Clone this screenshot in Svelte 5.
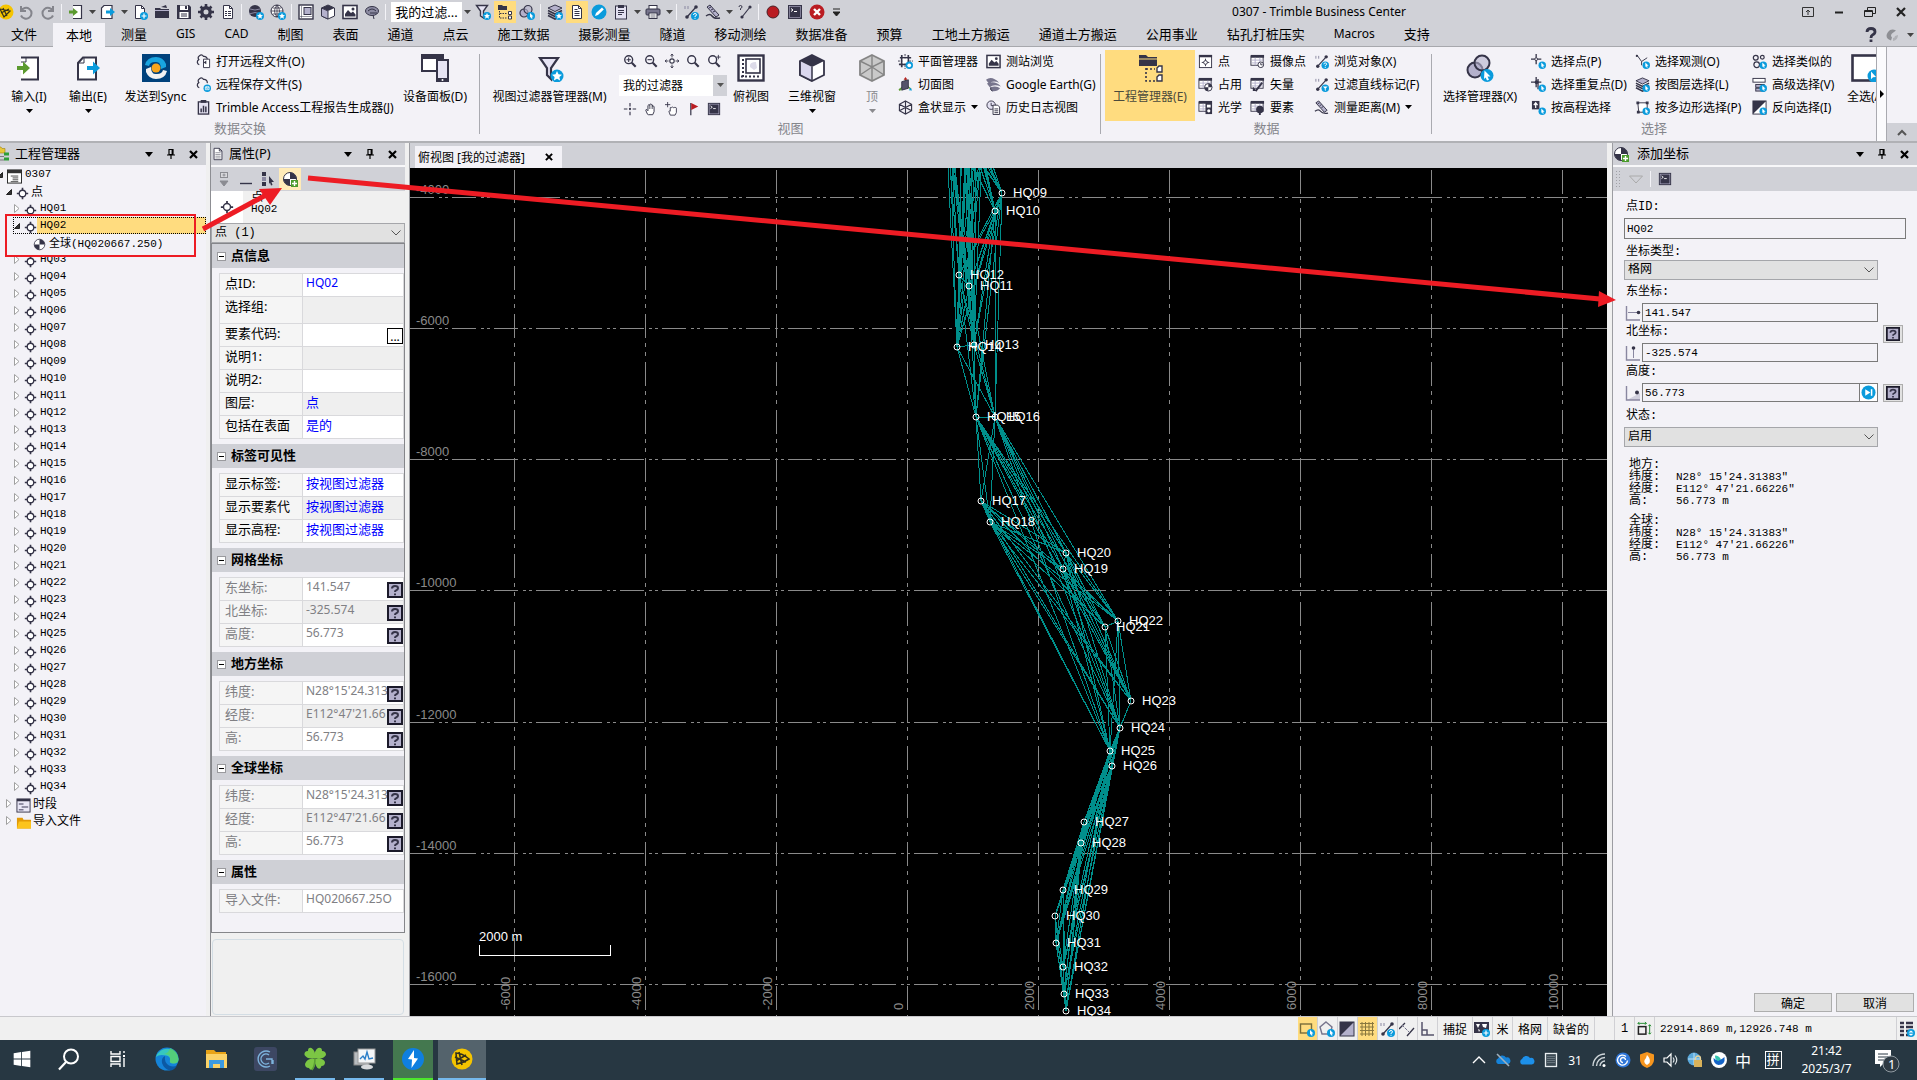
<script>
	const D = "#353448";
	const L = "#b4b1cc";
	const B = "#0a9bdc";

	const badge = (mark) => `<circle cx="12" cy="12" r="4" fill="${B}"/>${mark}`;
	const starMark = `<path d="M12 9l.9 2 2.1.2-1.6 1.4.5 2.1-1.9-1.1-1.9 1.1.5-2.1L9 11.200l2.100-.2z" fill="#fff"/>`;
	const cursorMark = `<path d="M11 9l3.500 3.500h-1.700l.8 1.800-1 .4-.8-1.700-.8.8z" fill="#fff"/>`;
	const infoMark = `<path d="M10.500 11q0-1.500 1.500-1.500t1.500 1.400q0 1-1.500 1.300v.8M12 13.800v1" stroke="#fff" fill="none"/>`;
	const filterMark = `<path d="M9.500 10h5l-2 2.300v2.500l-1-.7v-1.800z" fill="#fff"/>`;
	const plusMark = `<path d="M12 9.500v5M9.500 12h5" stroke="#fff" stroke-width="1.200"/>`;
	const grid = `<rect x="1" y="2" width="13" height="10" fill="#fff" stroke="${D}"/><rect x="1" y="1" width="14" height="3" fill="${D}"/><path d="M2 6.500h12M2 9.500h12M5.500 4v8M10.500 4v8" stroke="${L}"/>`;
	const measure = `<path d="M4 13l9-10" stroke="${D}" stroke-width="1.200"/><circle cx="4" cy="13" r="1.800" fill="${D}"/><circle cx="13" cy="3" r="1.800" fill="${D}"/><path d="M2 2v3M5 2v3" stroke="#8987a0"/>`;
	const page = `<path d="M3.500 1.500h6l3 3v10h-9z" fill="#fff" stroke="${D}"/><path d="M9.500 1.500v3h3" fill="none" stroke="${D}"/>`;
	const lens = `<circle cx="6.500" cy="6.500" r="4.500" fill="#f6f5fb" stroke="${D}" stroke-width="1.600"/><path d="M10 10l4.500 4.500" stroke="${D}" stroke-width="2.400"/>`;
	const term = `<rect x="1.500" y="1.500" width="13" height="13" fill="${D}" stroke="${D}"/><rect x="2.500" y="2.500" width="11" height="11" fill="none" stroke="${L}" stroke-width=".6"/><path d="M4 4.500l2 1.500-2 1.500M7 7.500h3" stroke="#fff" fill="none"/>`;
	const stack = `<path d="M8 1l7 3-7 3.500L1 4z" fill="${L}" stroke="${D}"/><path d="M1 6.500L8 10l7-3.500M1 9L8 12.500 15 9M1 11.500L8 15l7-3.500" fill="none" stroke="${D}" stroke-width="1.600"/>`;
	const globePoint = `<circle cx="8" cy="8" r="6.500" fill="#fff" stroke="${D}"/><path d="M8 8V1.500A6.500 6.500 0 0 1 14.500 8zM8 8v6.500A6.500 6.500 0 0 1 1.500 8z" fill="${D}"/>`;
	const rings = `<circle cx="5" cy="9" r="4" fill="${L}" stroke="${D}" stroke-width="1.200"/><circle cx="9" cy="5.500" r="4" fill="${L}" fill-opacity=".6" stroke="${D}" stroke-width="1.200"/>`;
	const cloud = `<path d="M3.500 11.500a3 3 0 0 1-.5-5.500 3 3 0 0 1 5-3.500 3.500 3.500 0 0 1 4 4" fill="none" stroke="${D}" stroke-width="1.300"/>`;
	const funnel = `<path d="M1.500 1.500h11l-4 5.500v7l-3-2V7z" fill="#e6e4f4" stroke="${D}" stroke-width="1.400"/>`;

	const icons = {
		app: `<circle cx="6" cy="8" r="7.500" fill="#f5c400"/><path d="M0 5l10 2-6 6zM1 9l8-4M3 4l4 8" stroke="#33301c" fill="none" stroke-width="1.200"/>`,
		undo: `<path d="M3 2v5h5M3 7a5.500 5.500 0 1 1 0 4.500" fill="none" stroke="#84858c" stroke-width="2"/>`,
		redo: `<path d="M13 2v5H8M13 7a5.500 5.500 0 1 0 0 4.500" fill="none" stroke="#84858c" stroke-width="2"/>`,
		import: `<path d="M5 1.500h8.500v13H5" fill="#fff" stroke="${D}" stroke-width="1.200"/><path d="M1 6.500h4V4l5 4-5 4V9.500H1z" fill="#5b9a2f"/>`,
		export: `<path d="M4 1.500h8v13H1.500V4z" fill="#fff" stroke="${D}" stroke-width="1.200"/><path d="M6 6.500h4V4l5 4-5 4V9.500H6z" fill="${B}"/>`,
		newdoc: page + badge(plusMark),
		open: `<path d="M1 4h5l1 1h8v9H1z" fill="${D}"/><path d="M1 6.500h14" stroke="${L}"/><path d="M7 3l5-2 1 3z" fill="${D}"/>`,
		save: `<path d="M1 1h12l2 2v12H1z" fill="${D}"/><rect x="4" y="1.500" width="8" height="4.500" fill="#fff"/><rect x="3.500" y="8" width="9" height="6" fill="#fff"/><path d="M5 10h6M5 12h6" stroke="${D}"/><rect x="9" y="2" width="2" height="3" fill="${D}"/>`,
		gear: `<circle cx="8" cy="8" r="4.200" fill="none" stroke="${D}" stroke-width="3.400"/><path d="M8 0v3M8 13v3M0 8h3M13 8h3M2.500 2.500l2 2M11.500 11.500l2 2M13.500 2.500l-2 2M4.500 11.500l-2 2" stroke="${D}" stroke-width="2.600"/>`,
		doc: page + `<path d="M5 7.500h2M8 7.500h3M5 9.500h2M8 9.500h3M5 11.500h2M8 11.500h3" stroke="${D}"/>`,
		globeStar: `<circle cx="7" cy="7" r="6" fill="${D}"/><path d="M1 10q6-3 12 0M2 5q5 2 10 0" stroke="#8987a0" fill="none"/>` + badge(starMark),
		gridGlobe: `<circle cx="7" cy="7" r="6" fill="#fff" stroke="${D}"/><path d="M1 7h12M7 1v12M2.500 4h9M2.500 10h9M7 1q-5 6 0 12M7 1q5 6 0 12" fill="none" stroke="${D}" stroke-width=".8"/>` + badge(starMark),
		plan: `<rect x="1" y="1" width="14" height="14" fill="#fff" stroke="${D}" stroke-width="1.400"/><path d="M3.500 2.500v11M2.500 12.500h11" stroke="${D}" stroke-dasharray="1 1"/><rect x="6" y="3.500" width="7" height="7" fill="${L}" stroke="${D}"/>`,
		cube: `<path d="M8 1l6.500 3v8L8 15l-6.500-3V4z" fill="#fff" stroke="${D}"/><path d="M8 1l6.500 3L8 7 1.500 4z" fill="${D}"/><path d="M8 7v8l-6.500-3V4z" fill="${L}" stroke="${D}"/>`,
		photo: `<rect x="1" y="1.500" width="14" height="13" fill="#fff" stroke="${D}" stroke-width="1.600"/><path d="M3 12.500V10l3-4 3 3 2-1.500 2.500 3v2z" fill="${D}"/><circle cx="11" cy="5" r="1.500" fill="${D}"/>`,
		cloudDark: `<ellipse cx="8" cy="7" rx="6.500" ry="4.500" fill="#8c8ba2" stroke="${D}"/><path d="M4 7q4-4 8 0M6 9h7M9 11l1 4" stroke="${D}" fill="none"/>`,
		filterStar: funnel + badge(starMark),
		project: `<path d="M1 1h4l1 1h4v4H1z" fill="${D}"/><path d="M2.500 7v7h8M3 9.500h7" stroke="${D}" fill="none" stroke-dasharray="1.500 1"/><path d="M11.500 7.500h3v3h-3zM11.500 12h3v3h-3z" fill="#fff" stroke="${D}"/>`,
		ringsCursor: rings + badge(cursorMark),
		stackStar: stack + badge(starMark),
		stackCursor: stack + badge(cursorMark),
		docs: page + `<path d="M5.500 5.500h3M5.500 7.500h5M5.500 9.500h5M5.500 11.500h5" stroke="${D}"/>`,
		edit: `<circle cx="8" cy="8" r="7.500" fill="${B}"/><path d="M4 12l1-3 6-5.500 1.800 2L7 11z" fill="#fff"/>`,
		clip: `<rect x="2.500" y="2" width="11" height="13" fill="#e3e1f1" stroke="${D}"/><rect x="5" y="1" width="6" height="3" fill="${D}"/><path d="M5 6.500h6M5 8.500h6M5 10.500h4" stroke="${D}"/>`,
		print: `<rect x="4" y="1.500" width="8" height="4" fill="#fff" stroke="${D}"/><rect x="1" y="5" width="14" height="6" rx="1" fill="#77758d" stroke="${D}"/><rect x="4" y="9" width="8" height="5.500" fill="#fff" stroke="${D}"/><path d="M5.500 11h5M5.500 13h5" stroke="${D}" stroke-width=".7"/>`,
		measureInfo: measure + badge(infoMark),
		measureFilter: measure + badge(filterMark),
		ruler: `<path d="M2 3l3-2 9 10-3 2zM4 4l2-1M6 6l2-1M8 8l2-1" fill="${L}" stroke="${D}"/><path d="M1 12q4-3 6 0t8 2" fill="none" stroke="${D}" stroke-width="1.400"/>`,
		measureQ: `<path d="M5 13l8-10" stroke="${D}" stroke-width="1.200"/><circle cx="5" cy="13" r="1.600" fill="${D}"/><circle cx="13" cy="3" r="1.600" fill="${D}"/><path d="M2 3q0-1.500 1.500-1.500T5 3q0 1-1.500 1.500V6" stroke="${D}" fill="none"/>`,
		record: `<circle cx="8" cy="8" r="6" fill="#ba1c22" stroke="#4b2026"/>`,
		term,
		stop: `<circle cx="8" cy="8" r="7.500" fill="#ba1c22"/><path d="M5 5l6 6M11 5l-6 6" stroke="#fff" stroke-width="2.400"/>`,
		cloudDoc: cloud + `<path d="M8 5.500h6.500v9H8z" fill="#fff" stroke="${D}"/><path d="M8 9l3-2v4z" fill="${D}"/>`,
		cloudSave: cloud + badge(`<path d="M10 10.500h4v3h-4zM11 10v2h2v-2" fill="none" stroke="#fff" stroke-width=".8"/>`),
		report: `<rect x="2.500" y="2" width="11" height="13" fill="#e3e1f1" stroke="${D}" stroke-width="1.400"/><rect x="5" y="0" width="6" height="3" fill="${D}"/><path d="M5.500 13V9M8 13V6M10.500 13V7" stroke="${D}" stroke-width="1.600"/>`,
		zoomIn: lens + `<path d="M4 6.500h5M6.500 4v5" stroke="${D}" stroke-width="1.200"/>`,
		zoomOut: lens + `<path d="M4 6.500h5" stroke="${D}" stroke-width="1.200"/>`,
		zoom: lens,
		zoomPlus: lens + `<path d="M13 1v5M10.500 3.500h5" stroke="${D}"/>`,
		extents: `<circle cx="8" cy="8" r="2.500" fill="#fff" stroke="${D}" stroke-width="1.300"/><path d="M8 0v4M8 12v4M0 8h4M12 8h4M6.500 2L8 0l1.500 2M6.500 14L8 16l1.500-2M2 6.500L0 8l2 1.500M14 6.500L16 8l-2 1.500" stroke="${D}" fill="none"/>`,
		center: `<circle cx="8" cy="8" r="1.300" fill="${D}"/><path d="M8 1v4M8 11v4M1 8h4M11 8h4" stroke="${D}" stroke-width="1.300"/>`,
		hand: `<path d="M4 14L2 9.500q0-1.500 1.500-.5l1 1V4q1-1.500 1.700 0V3q1-1.500 1.800 0v.5q1-1.500 1.800 0V5q1.200-1 1.700.5V11l-1.500 3.500H5z" fill="#fff" stroke="${D}" stroke-width="1.100"/><path d="M6.200 4v4M8 3.500V8M9.800 4v4" stroke="${D}" stroke-width=".7"/>`,
		handPlus: `<path d="M6 15L4.500 11q0-1.500 1.500-.5V6.500q1-1.500 1.700 0 1-1.500 1.800 0 1-1 1.800 0 1.200-1 1.700.5V12l-1.500 3z" fill="#fff" stroke="${D}"/><path d="M3 0v6M0 3h6" stroke="${D}"/>`,
		flag: `<path d="M5.500 1v14" stroke="${D}" stroke-width="1.400"/><path d="M6 1l8 4-8 4z" fill="#ba1c22"/>`,
		planeMgr: `<path d="M2 4h12M1 11h12M4 1v13M11 1v13" stroke="${D}" stroke-width="1.800"/><path d="M0 7.500h16M7.500 0v16" stroke="${D}" stroke-dasharray="2 1"/><rect x="5" y="5" width="5" height="5" fill="#fff"/>` + badge(`<circle cx="12" cy="12" r="2" fill="#fff"/>`),
		section: `<path d="M8 6V1M9 9l5 4M7 9l-6 5" stroke="#5b9a2f" stroke-width="1.400"/><path d="M4 5l7-2v9l-7 2z" fill="#55536b" stroke="${D}"/><path d="M8 0l2 3H6z" fill="#ba1c22"/><path d="M15 14.500l-3.500-.5 2-2.500z" fill="${B}"/><path d="M1 14.500l3-.5-2-2z" fill="#5b9a2f"/>`,
		boxes: `<path d="M8 1l6.500 3.500v7L8 15l-6.500-3.500v-7zM1.500 4.500L8 8l6.500-3.500M8 8v7M8 1v7M1.500 11.500L8 8l6.500 3.500" fill="none" stroke="${D}" stroke-width="1.200"/>`,
		earth: `<path d="M0 3q6-5 14 3-7-3-11 1zM1 7q8-4 15 3-8-3-12 1zM5 11q6-2 10 1-3 4-9 3-2-2-1-4z" fill="#77758d"/><path d="M5 11q-1 3 2 4" stroke="${D}" fill="none"/>`,
		history: `<circle cx="5.500" cy="5.500" r="4.500" fill="#e3e1f1" stroke="${D}"/><path d="M5.500 3v3H8" stroke="${D}" fill="none"/><path d="M7.500 5.500h5l2 2v8h-7z" fill="#fff" stroke="${D}"/><path d="M9 9.500h4M9 11.500h4M9 13.500h4" stroke="${D}"/>`,
		pointBox: `<rect x="1.500" y="1.500" width="13" height="13" fill="#fff" stroke="${D}"/><rect x="1" y="1" width="14" height="2.500" fill="${D}"/><circle cx="8" cy="9" r="2" fill="none" stroke="${D}"/><path d="M8 5v2M8 11v2M4 9h2M10 9h2" stroke="${D}"/>`,
		occupy: grid + `<circle cx="11" cy="11" r="4" fill="#fff" stroke="${D}"/><path d="M11 11V7a4 4 0 0 1 4 4zM11 11v4a4 4 0 0 1-4-4z" fill="${D}"/>`,
		optics: grid + `<rect x="8" y="3" width="7" height="12" fill="${D}"/><rect x="9.500" y="5" width="4" height="3" fill="#fff"/><circle cx="11.500" cy="11.500" r="1.700" fill="#fff"/>`,
		camera: grid + `<circle cx="11.500" cy="11.500" r="3" fill="#fff" stroke="${D}"/><path d="M11.500 9.500v2h2" stroke="${D}" fill="none"/>`,
		vector: grid + `<path d="M6 15l7-9" stroke="${D}" stroke-width="2"/><path d="M3 10l4 5H3z" fill="${D}"/>`,
		feature: grid + `<circle cx="10.500" cy="10" r="4" fill="${D}"/><path d="M10.500 11v5" stroke="${D}" stroke-width="2"/>`,
		selPoint: `<path d="M5.500 0v4M5.500 7v4M0 5.500h4M7 5.500h4" stroke="${D}" stroke-width="1.400"/><circle cx="5.500" cy="5.500" r="1.500" fill="none" stroke="${D}"/>` + badge(cursorMark),
		selDup: `<path d="M5.500 0v11M0 5.500h11M7.500 2v11" stroke="${D}" stroke-width="1.400"/><circle cx="6" cy="5.500" r="2" fill="${D}"/>` + badge(cursorMark),
		selElev: `<rect x="1" y="1" width="8" height="9" fill="${D}"/><path d="M5 8.500V3.500M3 5.500l2-2.500 2 2.500" stroke="#fff" stroke-width="1.300" fill="none"/>` + badge(cursorMark),
		selObs: `<path d="M2 1l5 7 6-4M7 8v4" fill="none" stroke="${D}"/><circle cx="2" cy="2" r="1.200" fill="${D}"/>` + badge(cursorMark),
		selPoly: `<path d="M3 3h10v10H4z" fill="#fff" stroke="${D}"/><path d="M1.500 1.500h3v3h-3zM11.500 1.500h3v3h-3zM2 11.500h3v3H2z" fill="${D}"/>` + badge(cursorMark),
		selLike: `<circle cx="4" cy="4" r="2.600" fill="none" stroke="${D}" stroke-width="1.300"/><circle cx="11" cy="3.500" r="2" fill="none" stroke="${D}" stroke-width="1.300"/><circle cx="5" cy="11.500" r="3" fill="none" stroke="${D}" stroke-width="1.300"/>` + badge(cursorMark),
		selAdv: `<rect x="1" y="1.500" width="13" height="4" fill="#fff" stroke="${D}"/><rect x="4" y="8" width="9" height="3" fill="${L}" stroke="${D}"/><rect x="4" y="12" width="9" height="3" fill="${L}" stroke="${D}"/>` + badge(cursorMark),
		invert: `<rect x="1" y="1" width="14" height="14" fill="#fff" stroke="${D}"/><path d="M1 1h14L1 15z" fill="${D}"/>` + badge(cursorMark),
		// panels
		tree: `<path d="M0 1h6l1 1.500h3V7H0z" fill="#e9c83a" stroke="#a18412" stroke-width=".6"/><path d="M3.500 8v6h5M3.500 10.500h5" stroke="#222" stroke-dasharray="1 1" fill="none"/><path d="M9 6.500h5v3H9zM9 11.500h5v3H9z" fill="#2f9e3a"/>`,
		sheet: page + `<path d="M5 6.500h6M5 8.500h6M5 10.500h6M5 12.500h6" stroke="#8c8c96"/>`,
		coord: globePoint + `<rect x="9" y="9" width="7" height="7" fill="#4b9b2c"/><path d="M12.500 10v5M10 12.500h5" stroke="#fff" stroke-width="1.400"/>`,
		globePoint,
		point: `<circle cx="8" cy="8" r="4" fill="#fff" stroke="${D}" stroke-width="1.600"/><path d="M8 1v3M8 12v3M1 8h3M12 8h3" stroke="${D}" stroke-width="2"/>`,
		root: `<rect x=".5" y="1" width="15" height="14" fill="#fff" stroke="#222"/><rect x="1" y="1" width="14" height="3.500" fill="#333"/><path d="M4 7.500h8M6 9.500h6M6 11.500h6M4 13.500h8" stroke="#444"/>`,
		session: `<rect x="1" y="1" width="14" height="14" fill="#e9e7f6" stroke="${D}"/><rect x="1" y="1" width="14" height="2.500" fill="${D}"/><path d="M3 6.500h5M6 9.500h7M3 12.500h5" stroke="#77758d" stroke-width="1.600"/>`,
		folder: `<path d="M1 3h6l1 2h8v9.500H1z" fill="#e29a06"/><path d="M1 14.500L3 7h13v7.500z" fill="#fcc41c"/>`,
		pinDown: `<rect x="4.500" y="1.500" width="7" height="5" fill="#d8d8dc" stroke="#8b8c92"/><path d="M8 2.500v3M6.500 4h3M4 10h8l-4 5z" stroke="#8b8c92" fill="#8b8c92"/>`,
		minus: `<path d="M2 12.500h12" stroke="${D}" stroke-width="1.400"/>`,
		listSel: `<path d="M2 1h4v4H2zM2 11h4v4H2z" fill="${D}"/><path d="M2 6h4v4H2z" fill="#8987a0"/><path d="M9 5l5 6h-2.500l1 3-1.500.5-1-3L9 13z" fill="${D}"/>`,
		east: `<path d="M1.500 1v14H15" stroke="#8987a0" fill="none" stroke-width="1.400"/><path d="M3 7.500h10" stroke="#8987a0"/><circle cx="13.500" cy="7.500" r="1.800" fill="${D}"/>`,
		north: `<path d="M1.500 1v14H15" stroke="#8987a0" fill="none" stroke-width="1.400"/><path d="M8.500 3v10" stroke="#8987a0"/><circle cx="8.500" cy="3" r="1.800" fill="${D}"/>`,
		height: `<path d="M2 15l13-7v7z" fill="#d0cfdd"/><path d="M1.500 1v14H15" stroke="#8987a0" fill="none" stroke-width="1.400"/><circle cx="12" cy="7.500" r="2" fill="${D}"/>`,
		play: `<circle cx="8" cy="8" r="7.500" fill="${B}"/><path d="M4.500 4.500L10 8l-5.500 3.500z" fill="#fff"/><path d="M11.300 4.500v7" stroke="#fff" stroke-width="1.600"/>`,
		tri: `<path d="M1.500 5h13L8 12z" fill="none" stroke="#aaa"/>`,
		help: `<rect x="1" y="1" width="14" height="14" fill="${L}" stroke="#1b1a2a" stroke-width="2"/><path d="M5 6.500q0-2.500 3-2.500t3 2.300q0 1.400-1.700 2-1.300.4-1.300 1.700" stroke="${D}" stroke-width="2" fill="none"/><path d="M7 11.500h2v1.700H7z" fill="${D}"/>`,
		// status bar
		snapRect: `<rect x="1.500" y="3" width="11" height="9" fill="none" stroke="#7a6d3b" stroke-width="1.400"/>` + badge(cursorMark),
		snapPoly: `<path d="M7 1l6 5-2 7H3L1 6z" fill="none" stroke="#77758d" stroke-width="1.400"/>` + badge(cursorMark),
		snapInv: `<rect x="1" y="1" width="14" height="14" fill="${L}" stroke="${D}"/><path d="M1 1h14L1 15z" fill="${D}"/>`,
		snapGrid: `<path d="M1 2.500h14M1 6h14M1 9.500h14M1 13h14M3 1v14M6.500 1v14M10 1v14M13.500 1v14" stroke="#8a783f"/>`,
		snapLines: `<path d="M0 8l6-6M8 15l7-8" stroke="${D}" stroke-width="1.300"/><path d="M3 4l8 8" stroke="#77758d" stroke-dasharray="3 1"/>`,
		snapPerp: `<path d="M3 1v13h12M3 9h5v5" fill="none" stroke="#55536b" stroke-width="1.500"/>`,
		map: `<rect x="0" y="1" width="15" height="11" fill="${D}"/><path d="M2 3h4l-2 4zM8 3h5l-1 4-3-1zM4 8l2 1-1 2z" fill="#fff"/>` + badge(plusMark),
		dims: `<rect x="1.500" y="6" width="8" height="8" fill="none" stroke="#222" stroke-width="1.600"/><path d="M1 2.500h9M2.500 1L1 2.500 2.500 4M8.500 1L10 2.500 8.500 4M13.500 4v10M12 5.500L13.500 4 15 5.500M12 12.500l1.500 1.500 1.500-1.500" stroke="#1d8a2a" fill="none"/>`,
		rows: `<path d="M1 2h4M1 6h4M1 10h4M1 14h4M7 2h7M7 6h7M7 10h3M7 14h3" stroke="${D}" stroke-width="2.400"/>` + badge(`<path d="M9.500 11.500l2.500-2 2.500 2zM9.500 12.800l2.500 2 2.500-2z" fill="#fff"/>`),
		// tray
		caretUp: `<path d="M2 11l6-6 6 6" fill="none" stroke="#fff" stroke-width="1.400"/>`,
		driveOff: `<path d="M3 12a3 3 0 0 1 0-5.500 4.500 4.500 0 0 1 8-1 3.300 3.300 0 0 1 2 6.500z" fill="#1583da"/><path d="M2 2l12 12" stroke="#9fb0bc" stroke-width="1.600"/>`,
		drive: `<path d="M3 12.500a3 3 0 0 1 0-5.500 4.500 4.500 0 0 1 8-1 3.300 3.300 0 0 1 2 6.500z" fill="#1d90ea"/>`,
		chip: `<rect x="2.500" y="1.500" width="11" height="13" fill="#3c4a54" stroke="#e9eef1" stroke-width="1.300"/><path d="M5 4v8M7 4v8M9 4v8M11 4v8" stroke="#93a0a8" stroke-dasharray="1 1"/>`,
		wifi: `<path d="M2 14A12 12 0 0 1 14 2M5.500 14A8.500 8.500 0 0 1 14 5.500M9 14a5 5 0 0 1 5-5" fill="none" stroke="#cfd6da" stroke-width="1.400"/><circle cx="13" cy="13.500" r="1.500" fill="#fff"/>`,
		swirl: `<circle cx="8" cy="8" r="7.500" fill="#2f76d8"/><path d="M11 4.500a5 5 0 1 0 1.500 4M10.500 8a2.500 2.500 0 1 0-2.500 2.500" fill="none" stroke="#fff" stroke-width="1.400"/>`,
		shield: `<path d="M8 0l7 2.500V8q0 5-7 8-7-3-7-8V2.500z" fill="#f6951e"/><path d="M8 3q4 4 2.500 8L8 13q-5-3-1-7z" fill="#fff"/>`,
		sound: `<path d="M1 6h3l4-4v12l-4-4H1z" fill="none" stroke="#fff" stroke-width="1.200"/><path d="M10 5.500q2 2.500 0 5M12 3.500q3.500 4.500 0 9" fill="none" stroke="#dfe5e8" stroke-width="1.200"/>`,
		lock: `<circle cx="7" cy="7" r="6.500" fill="#5aa9dc"/><path d="M7 1v12M1 7h12" stroke="#bfe0f3"/><rect x="7" y="8" width="8" height="7" fill="#d9b25a"/><path d="M8.500 8V6.500a2.500 2.500 0 0 1 5 0V8" stroke="#e8d29a" stroke-width="1.300" fill="none"/>`,
		bird: `<circle cx="8" cy="8" r="8" fill="#fff"/><path d="M2.500 6q5 5 11-1 1 8-6 8-5-1-5-7z" fill="#1464c8"/><path d="M4 3.500q4 0 6 4L7 9q-3-1-3-5.500z" fill="#35c5b0"/>`,
	};

	const big = {
		import: `<path d="M6 3.500h17v22H6" fill="#fff" stroke="${D}" stroke-width="2"/><path d="M11 3v5H6" fill="none" stroke="${D}"/><path d="M2 12h6V7.500l7 6.500-7 6.500V16H2z" fill="#5b9a2f"/>`,
		export: `<path d="M9 3.500h13v22H4V9z" fill="#fff" stroke="${D}" stroke-width="2"/><path d="M10 3v6H4" fill="none" stroke="${D}"/><path d="M13 12h6V7.500l7 6.500-7 6.500V16h-6z" fill="${B}"/>`,
		sync: `<rect width="28" height="28" fill="#00427c"/><path d="M3 11q2-8 11-8 7 0 10 7v3l-5 2q0-8-6-7-5 0-6 4z" fill="#19a5e0"/><path d="M25 17q-2 8-11 8-7 0-10-7v-3l5-2q0 8 6 7 5 0 6-4z" fill="#f2f2f2"/><circle cx="14" cy="14" r="4.500" fill="#f9a51b"/>`,
		devices: `<rect x="1" y="1" width="21" height="16" fill="#fff" stroke="${D}" stroke-width="2"/><path d="M0 0h23v5H0z" fill="${D}"/><rect x="16" y="6" width="11" height="21" fill="#e6e4f4" stroke="${D}" stroke-width="2"/><path d="M15 24h13v4H15z" fill="${D}"/><circle cx="21.500" cy="26" r="1" fill="#fff"/>`,
		filter: `<path d="M4 4h18l-7 10v11l-4-4v-7z" fill="#e6e4f4" stroke="${D}" stroke-width="2.200"/><circle cx="21" cy="22" r="6.500" fill="${B}"/><path d="M21 17l1.500 3.300 3.500.4-2.600 2.400.7 3.500-3.100-1.800-3.100 1.800.7-3.500-2.600-2.400 3.500-.4z" fill="#fff"/>`,
		plan: `<rect x="1.500" y="1.500" width="25" height="25" fill="#fff" stroke="${D}" stroke-width="2.400"/><path d="M6 5v18M4 22.500h20" stroke="${D}" stroke-width="2" stroke-dasharray="2 2"/><rect x="9" y="5" width="14" height="14" fill="#fff" stroke="${D}" stroke-width="1.600"/><path d="M19 8q-7 0-6 5l4 3 3-2z" fill="#dcdae8"/>`,
		cube: `<path d="M14 1l12 6v14l-12 6-12-6V7z" fill="#fff" stroke="${D}" stroke-width="1.800"/><path d="M14 13v14L2 21V7z" fill="#dad7ee"/><path d="M14 1l12 6-12 6L2 7z" fill="${D}"/><path d="M14 13v14" stroke="${D}" stroke-width="1.500"/><path d="M2 7v14l12 6" fill="none" stroke="${D}" stroke-width="1.800"/>`,
		cubeGray: `<path d="M14 1l12 6v14l-12 6-12-6V7z" fill="#c9c9c9" stroke="#858585" stroke-width="1.800"/><path d="M2 7l12 6 12-6M14 13v14M14 13L2 21M14 13l12 8M14 1v12" fill="none" stroke="#858585" stroke-width="1.400"/>`,
		project: `<path d="M3 1h7l2 2h9v9H3z" fill="${D}"/><path d="M1 5h22" stroke="#ffdc7f"/><path d="M10 15h9M10 14v13h10" stroke="${D}" fill="none" stroke-width="1.600" stroke-dasharray="2 2"/><path d="M21 14l2-2h3v6h-5zM21 23l2-2h3v6h-5z" fill="#fff" stroke="${D}" stroke-width="1.400"/>`,
		rings: `<circle cx="9" cy="16" r="7.500" fill="${L}" stroke="${D}" stroke-width="2"/><circle cx="16" cy="9" r="7.500" fill="${L}" fill-opacity=".6" stroke="${D}" stroke-width="2"/><circle cx="21" cy="21.500" r="6.500" fill="${B}"/><path d="M18.500 16.500l6 6h-3l1.500 3.300-2 .8-1.300-3.200-1.700 1.600z" fill="#fff"/>`,
		all: `<rect x="1.500" y="1.500" width="27" height="25" fill="#fff" stroke="${D}" stroke-width="2.600"/><circle cx="23" cy="22" r="6.500" fill="${B}"/><path d="M20 17.500l5 5.500-3 .3-2 2z" fill="#fff"/>`,
	};

	const apps = {
		start: `<path d="M2 4.500l9-1.300V11H2zM12 3l10-1.500V11H12zM2 12h9v7.800L2 18.500zM12 12h10v9.500L12 20z" fill="#fff" transform="translate(0 .5)"/>`,
		search: `<circle cx="14" cy="9.500" r="7" fill="none" stroke="#fff" stroke-width="2"/><path d="M9 15l-7 7.500" stroke="#fff" stroke-width="2.200"/>`,
		task: `<path d="M5 4v3h9V4M5 20v-3h9v3M5 9.500h9v5H5zM18 4v2M18 11v9" fill="none" stroke="#fff" stroke-width="1.400"/><path d="M17 8h2v2h-2z" fill="#fff"/>`,
		edge: `<circle cx="12" cy="12" r="11.500" fill="#1583d8"/><path d="M1 10A11.500 11.500 0 0 1 23.500 12q0 4.500-5 4.500-4.500 0-3.500-3.500.5-4-4-4.500Q4 7 1 10z" fill="#37c6c0"/><path d="M15 1q8 3 8.500 11 0 4.500-5 4.500-4.500 0-3.500-3.500 1-6-6-6 5-1 6-6z" fill="#5fd35e" fill-opacity=".7"/><path d="M10 9q-4 2-3 7 2 6 8 7.500 4 0 7-5-4 2-8 0-5-3-4-9.500z" fill="#0c59a4"/>`,
		files: `<path d="M2 3h8l2 2h10v16H2z" fill="#e8a317"/><path d="M2 7h21v14H2z" fill="#fbd267"/><path d="M5 21v-8h15v8h-4v-4H9v4z" fill="#3c9ae0"/>`,
		gt: `<rect x="1" y="0" width="23" height="24" rx="3" fill="#3d4763"/><path d="M17 5A8 8 0 1 0 17 19M16 8a5 5 0 1 0 0 8M13 12h6v5M20 13v4" fill="none" stroke="#7db4de" stroke-width="1.400"/>`,
		clover: `<path d="M12 11Q5 13 1.500 8 1 4 5 4q0-4 3.500-3 4 2 3.500 10zM12 11q-1-8 3-10 4-1 4 3 4 0 4 4-3 5-11 3zM12 12q8-2 10 3 0 4-3.500 4-1 4-4 2-3-3-2.500-9zM12 12q1 7-2 10-3 2-4-1-4 0-4-4 2-6 10-5z" fill="#7cc644"/><path d="M12 11q0 8-3 12" stroke="#5a9e34" fill="none" stroke-width="1.600"/>`,
		monitor: `<rect x="2" y="5" width="15" height="13" fill="#b8bcc0" stroke="#888"/><rect x="6" y="2" width="17" height="14" fill="#f4f6f8" stroke="#999"/><path d="M8 12l3-3 2 3 2-7 2 7 4-1" fill="none" stroke="#2c7fc9" stroke-width="1.400"/><ellipse cx="15" cy="20" rx="6" ry="2.600" fill="#d7d9dc"/>`,
		bolt: `<circle cx="12" cy="12" r="11" fill="#0f7fe0"/><path d="M13 3L7 12l4 .5L10.500 21 17 11.500l-4-.5z" fill="#fff"/>`,
		trimble: `<circle cx="12" cy="12" r="10.500" fill="#f5c400"/><path d="M6 6q6 0 13 6-6 4-12 5zM5 10l11 5M6 14l10-6M9 5l3 13" stroke="#33301c" fill="none" stroke-width="1.600"/>`,
	};

	const quick = [
		"undo", "redo", "|", "import", "v", "export", "v", "newdoc", "open", "save", "gear", "doc", "|",
		"globeStar", "gridGlobe", "|", "plan", "cube", "photo", "cloudDark", "|", "combo", "v",
		"filterStar", "*project", "ringsCursor", "|", "stackStar", "*docs", "edit", "clip", "v", "print", "v", "|",
		"measureInfo", "ruler", "v", "measureQ", "|", "record", "term", "stop",
	];

	const tabs = [
		"文件", "本地", "测量", "GIS", "CAD", "制图", "表面", "通道", "点云", "施工数据", "摄影测量", "隧道", "移动测绘",
		"数据准备", "预算", "工地土方搬运", "通道土方搬运", "公用事业", "钻孔打桩压实", "Macros", "支持",
	];

	const groups = [
		{
			label: "数据交换",
			cls: "exchange",
			cols: [
				{ big: "import", text: "输入(I)", arrow: true },
				{ big: "export", text: "输出(E)", arrow: true },
				{ big: "sync", text: "发送到Sync" },
				{ list: [["cloudDoc", "打开远程文件(O)"], ["cloudSave", "远程保存文件(S)"], ["report", "Trimble Access工程报告生成器(J)"]] },
				{ big: "devices", text: "设备面板(D)" },
			],
		},
		{
			label: "视图",
			cls: "view",
			cols: [
				{ big: "filter", text: "视图过滤器管理器(M)" },
				{ zoom: true },
				{ big: "plan", text: "俯视图" },
				{ big: "cube", text: "三维视窗", arrow: true },
				{ big: "cubeGray", text: "顶", arrow: true, off: true },
				{ list: [["planeMgr", "平面管理器"], ["section", "切面图"], ["boxes", "盒状显示", true]] },
				{ list: [["photo", "测站浏览"], ["earth", "Google Earth(G)"], ["history", "历史日志视图"]] },
			],
		},
		{
			label: "数据",
			cls: "data",
			cols: [
				{ big: "project", text: "工程管理器(E)", on: true },
				{ list: [["pointBox", "点"], ["occupy", "占用"], ["optics", "光学"]] },
				{ list: [["camera", "摄像点"], ["vector", "矢量"], ["feature", "要素"]] },
				{ list: [["measureInfo", "浏览对象(X)"], ["measureFilter", "过滤直线标记(F)"], ["ruler", "测量距离(M)", true]] },
			],
		},
		{
			label: "选择",
			cls: "select",
			cols: [
				{ big: "rings", text: "选择管理器(X)" },
				{ list: [["selPoint", "选择点(P)"], ["selDup", "选择重复点(D)"], ["selElev", "按高程选择"]] },
				{ list: [["selObs", "选择观测(O)"], ["stackCursor", "按图层选择(L)"], ["selPoly", "按多边形选择(P)"]] },
				{ list: [["selLike", "选择类似的"], ["selAdv", "高级选择(V)"], ["invert", "反向选择(I)"]] },
				{ big: "all", text: "全选(A)" },
			],
		},
	];

	const pad = (n) => String(n).padStart(2, "0");

	let tree = [
		{ level: 0, icon: "root", text: "0307", open: true, code: true },
		{ level: 1, icon: "point", text: "点", open: true },
	];
	for (let i = 1; i <= 34; i++) {
		tree.push({ level: 2, icon: "point", text: "HQ" + pad(i), open: i === 2, code: true });
		if (i === 2) tree.push({ level: 3, icon: "globePoint", text: "全球(HQ020667.250)", leaf: true, code: true });
	}
	tree.push({ level: 1, icon: "session", text: "时段" }, { level: 1, icon: "folder", text: "导入文件" });

	let selected = $state("HQ02");

	const angles = [
		{ k: "纬度:", v: "N28°15'24.313", help: true },
		{ k: "经度:", v: "E112°47'21.66", help: true },
		{ k: "高:", v: "56.773", help: true },
	];
	const sections = [
		{
			title: "点信息",
			rows: [
				{ k: "点ID:", v: "HQ02" },
				{ k: "选择组:", v: "", tall: true },
				{ k: "要素代码:", v: "", more: true },
				{ k: "说明1:", v: "" },
				{ k: "说明2:", v: "" },
				{ k: "图层:", v: "点" },
				{ k: "包括在表面", v: "是的" },
			],
		},
		{
			title: "标签可见性",
			rows: [
				{ k: "显示标签:", v: "按视图过滤器" },
				{ k: "显示要素代", v: "按视图过滤器" },
				{ k: "显示高程:", v: "按视图过滤器" },
			],
		},
		{
			title: "网格坐标",
			off: true,
			rows: [
				{ k: "东坐标:", v: "141.547", help: true },
				{ k: "北坐标:", v: "-325.574", help: true },
				{ k: "高度:", v: "56.773", help: true },
			],
		},
		{ title: "地方坐标", off: true, rows: angles },
		{ title: "全球坐标", off: true, rows: angles },
		{ title: "属性", off: true, rows: [{ k: "导入文件:", v: "HQ020667.25O" }] },
	];

	// map drawing, in pixels from the top left of the plan view
	const gridX = [104, 235, 366, 497, 628, 759, 890, 1021, 1152];
	const gridY = [29, 160, 291, 422, 554, 685, 816];
	const points = {
		9: [592, 25], 10: [585, 43], 11: [559, 118], 12: [549, 107], 13: [564, 177], 14: [547, 179],
		15: [566, 249], 16: [585, 249], 17: [571, 333], 18: [580, 354], 19: [653, 401], 20: [656, 385],
		21: [695, 459], 22: [708, 453], 23: [721, 533], 24: [710, 560], 25: [700, 583], 26: [702, 598],
		27: [674, 654], 28: [671, 675], 29: [653, 722], 30: [645, 748], 31: [646, 775], 32: [653, 799],
		33: [654, 826], 34: [656, 843],
	};
	// stations north of the visible area
	const above = [[535, -60], [539, -50], [553, -90], [557, -40], [560, -70], [566, -30], [572, -20]];

	const lines = [];
	const join = (from, to) => {
		for (let a = from; a <= to; a++)
			for (let b = a + 1; b <= to; b++) lines.push([points[a], points[b]]);
	};
	join(9, 16);
	join(15, 25);
	join(24, 34);
	for (const p of above) for (let i = 9; i <= 14; i++) lines.push([p, points[i]]);
	const network = lines.map(([a, b]) => `M${a[0]} ${a[1]}L${b[0]} ${b[1]}`).join("");

	const tray = ["caretUp", "driveOff", "drive", "chip", "31", "wifi", "swirl", "shield", "sound", "lock", "bird"];
</script>

{#snippet icon(name, size = 16)}
	<svg class="icon" width={size} height={size} viewBox="0 0 16 16" aria-hidden="true">{@html icons[name]}</svg>
{/snippet}

{#snippet caret()}
	<svg class="icon" width="7" height="4" viewBox="0 0 7 4" aria-hidden="true"><path d="M0 0h7L3.500 4z" fill="currentColor" /></svg>
{/snippet}

{#snippet chevron()}
	<svg class="chev" width="10" height="6" viewBox="0 0 10 6" aria-hidden="true"><path d="M.5.500L5 5 9.500.500" fill="none" stroke="#555" /></svg>
{/snippet}

{#snippet tools()}
	<button class="tool" aria-label="菜单"><svg width="8" height="5" viewBox="0 0 8 5"><path d="M0 0h8L4 5z" /></svg></button>
	<button class="tool" aria-label="固定"><svg width="8" height="10" viewBox="0 0 8 10"><path d="M2 .5h4v5H2zM5.200.5v5M0 6h8M4 6v4" fill="none" stroke="#000" stroke-width="1.200" /></svg></button>
	<button class="tool" aria-label="关闭"><svg width="9" height="9" viewBox="0 0 9 9"><path d="M1 1l7 7M8 1L1 8" stroke="#000" stroke-width="2.200" /></svg></button>
{/snippet}

<div class="window">
	<header>
		<div class="titlebar">
			<div class="quick">
				<svg class="icon" width="15" height="16" viewBox="0 0 15 16" aria-hidden="true">{@html icons.app}</svg>
				{#each quick as q}
					{#if q === "|"}
						<span class="sep"></span>
					{:else if q === "v"}
						<button class="drop" aria-label="更多">{@render caret()}</button>
					{:else if q === "combo"}
						<button class="quick-combo">我的过滤...</button>
					{:else}
						<button class="qa" class:on={q[0] === "*"} aria-label={q.replace("*", "")}>{@render icon(q.replace("*", ""))}</button>
					{/if}
				{/each}
				<button class="customize" aria-label="自定义"><svg width="7" height="8" viewBox="0 0 7 8"><path d="M0 1h7M0 4h7L3.500 8z" stroke="#222" fill="#222" /></svg></button>
			</div>
			<h1>0307 - Trimble Business Center</h1>
			<div class="controls">
				<button aria-label="功能区"><svg width="12" height="12" viewBox="0 0 12 12"><path d="M.5 1.500h11v9H.5zM6 9V4M4 6l2-2 2 2" fill="none" stroke="#333" /></svg></button>
				<button aria-label="最小化"><svg width="12" height="12" viewBox="0 0 12 12"><path d="M2 6.500h8" stroke="#222" stroke-width="2" /></svg></button>
				<button aria-label="还原"><svg width="12" height="12" viewBox="0 0 12 12"><path d="M3.500 4V1.500h8v6H9M.5 4.500h8v6h-8zM.5 5.500h8" fill="none" stroke="#222" /></svg></button>
				<button aria-label="关闭"><svg width="12" height="12" viewBox="0 0 12 12"><path d="M2 2l8 8M10 2l-8 8" stroke="#222" stroke-width="2.200" /></svg></button>
			</div>
		</div>
		<nav>
			{#each tabs as tab}
				<button class="tab" class:active={tab === "本地"} class:latin={tab === "GIS" || tab === "CAD" || tab === "Macros"}>{tab}</button>
			{/each}
			<div class="nav-help">
				<button aria-label="帮助"><svg width="12" height="16" viewBox="0 0 12 16"><path d="M2 5q0-3.500 4-3.500t4 3.200q0 2-2.300 3Q6 8.500 6 11" fill="none" stroke="#353448" stroke-width="2.800" /><path d="M4.600 12.500h2.800V15H4.600z" fill="#353448" /></svg></button>
				<button aria-label="账户"><svg width="14" height="14" viewBox="0 0 14 14"><path d="M11 2.500Q6 0 3 4t0 7l3 1.500 1-3q-2-2 0-4z" fill="#8e8f94" /><path d="M8 13q5-1 5-6l-3 1q0 2-2 2z" fill="#b0b1b6" /></svg></button>
				{@render caret()}
			</div>
		</nav>
	</header>

	<div class="ribbon">
		{#each groups as g}
			<section class="group {g.cls}">
				<div class="cols">
					{#each g.cols as c}
						{#if c.big}
							<button class="big" class:on={c.on} class:off={c.off}>
								<svg width="28" height="28" viewBox="0 0 28 28" aria-hidden="true">{@html big[c.big]}</svg>
								<span>{c.text}</span>
								{#if c.arrow}{@render caret()}{/if}
							</button>
						{:else if c.zoom}
							<div class="zooms">
								<div class="zoom-row">
									{#each ["zoomIn", "zoomOut", "extents", "zoom", "zoomPlus"] as z}
										<button aria-label={z}>{@render icon(z, 14)}</button>
									{/each}
								</div>
								<button class="combo"><span>我的过滤器</span><i>{@render caret()}</i></button>
								<div class="zoom-row">
									{#each ["center", "hand", "handPlus", "flag", "term"] as z}
										<button aria-label={z}>{@render icon(z, 14)}</button>
									{/each}
								</div>
							</div>
						{:else}
							<div class="list">
								{#each c.list as [ic, text, more]}
									<button class="cmd">{@render icon(ic, 15)}<span>{text}</span>{#if more}{@render caret()}{/if}</button>
								{/each}
							</div>
						{/if}
					{/each}
				</div>
				<h2>{g.label}</h2>
			</section>
		{/each}
		<button class="ribbon-next" aria-label="向右滚动"><svg width="4" height="8" viewBox="0 0 4 8"><path d="M0 0l4 4-4 4z" /></svg></button>
		<div class="ribbon-end">
			<button aria-label="折叠"><svg width="10" height="7" viewBox="0 0 10 7"><path d="M1 6l4-4 4 4" fill="none" stroke="#555" stroke-width="2" /></svg></button>
		</div>
	</div>

	<main>
		<aside class="explorer">
			<div class="panel-head">{@render icon("tree")}<h3>工程管理器</h3>{@render tools()}</div>
			<ul class="tree">
				{#each tree as n}
					<li class="level{n.level}" class:selected={n.text === selected}>
						<svg class="twisty" width="8" height="9" viewBox="0 0 8 9" aria-hidden="true">
							{#if n.open}
								<path d="M6.500 2.500v5h-5z" fill="#333" stroke="#222" />
							{:else if !n.leaf}
								<path d="M1.500.500l4.500 4-4.500 4z" fill="#fff" stroke="#a0a0a0" />
							{/if}
						</svg>
						{@render icon(n.icon, n.level > 1 || n.icon === "point" ? 13 : 15)}
						<button class:code={n.code} onclick={() => (selected = n.text)}>{n.text}</button>
					</li>
				{/each}
			</ul>
		</aside>

		<aside class="props">
			<div class="panel-head">{@render icon("sheet", 14)}<h3>属性(P)</h3>{@render tools()}</div>
			<div class="panel-tools">
				<button aria-label="固定选择">{@render icon("pinDown")}</button>
				<button aria-label="折叠">{@render icon("minus")}</button>
				<button aria-label="选择">{@render icon("listSel")}</button>
				<button class="on" aria-label="添加坐标">{@render icon("coord")}</button>
			</div>
			<div class="what">
				<div class="what-icon">{@render icon("point", 14)}</div>
				<div class="what-text"><span>点</span><span class="code">HQ02</span></div>
			</div>
			<div class="pick">
				<select aria-label="对象"><option>点 (1)</option></select>
				{@render chevron()}
			</div>
			<div class="sheet">
				{#each sections as s}
					<h4><i></i>{s.title}</h4>
					<table class:off={s.off}>
						<tbody>
							{#each s.rows as r}
								<tr class:tall={r.tall}>
									<th scope="row">{r.k}</th>
									<td>
										<div class="cell">
											<span class:cjk={!/\d/.test(r.v)}>{r.v}</span>
											{#if r.help}<button aria-label="设为未知">{@render icon("help")}</button>{/if}
											{#if r.more}<button class="more">...</button>{/if}
										</div>
									</td>
								</tr>
							{/each}
						</tbody>
					</table>
				{/each}
			</div>
			<div class="hint"></div>
		</aside>

		<section class="plan">
			<div class="plan-tabs">
				<button class="plan-tab">俯视图 [我的过滤器]<svg width="8" height="8" viewBox="0 0 9 9"><path d="M1 1l7 7M8 1L1 8" stroke="#000" stroke-width="2.200" /></svg></button>
			</div>
			<svg class="map" role="img" aria-label="俯视图">
				<g class="grid">
					{#each gridX as x}<line x1={x} y1="2" x2={x} y2="100%" stroke-dasharray="24 5 4 5 4 6" />{/each}
					{#each gridY as y}<line x1="0" y1={y} x2="100%" y2={y} stroke-dasharray="24 5 3 3 3 4" />{/each}
				</g>
				<g class="axis">
					{#each gridY as y, i}<text x="6" y={y - 3}>{-4000 - i * 2000}</text>{/each}
					{#each gridX as x, i}<text transform="translate({x - 4} 842) rotate(-90)">{-6000 + i * 2000}</text>{/each}
				</g>
				<path class="network" d={network} />
				{#each Object.entries(points) as [n, [x, y]]}
					<circle cx={x} cy={y} r="3" />
					<text class="mark" x={x + 11} y={y + 4}>HQ{pad(n)}</text>
				{/each}
				<path class="scale" d="M69 777v10h131v-10" />
				<text class="mark" x="69" y="773">2000 m</text>
			</svg>
		</section>

		<aside class="coords">
			<div class="panel-head">{@render icon("coord")}<h3>添加坐标</h3>{@render tools()}</div>
			<div class="panel-tools">
				<span class="grip"></span>
				<button aria-label="展开">{@render icon("tri")}</button>
				<span class="sep"></span>
				<button aria-label="命令">{@render icon("term", 14)}</button>
			</div>
			<form onsubmit={(e) => e.preventDefault()}>
				<label for="pid">点ID:</label>
				<input id="pid" class="wide" value="HQ02" />
				<label for="ctype">坐标类型:</label>
				<div class="pick"><select id="ctype"><option>格网</option></select>{@render chevron()}</div>
				<label for="east">东坐标:</label>
				<div class="field">{@render icon("east")}<input id="east" value="141.547" /></div>
				<div class="label-help">
					<label for="north">北坐标:</label>
					<button type="button" class="unknown" aria-label="设为未知">{@render icon("help", 14)}</button>
				</div>
				<div class="field">{@render icon("north")}<input id="north" value="-325.574" /></div>
				<label for="elev">高度:</label>
				<div class="field">
					{@render icon("height")}<input id="elev" value="56.773" />
					<button type="button" class="play" aria-label="选项">{@render icon("play", 15)}</button>
					<button type="button" class="unknown" aria-label="设为未知">{@render icon("help", 14)}</button>
				</div>
				<label class="status-label" for="state">状态:</label>
				<div class="pick"><select id="state"><option>启用</option></select>{@render chevron()}</div>
				{#each ["地方:", "全球:"] as name}
					<dl>
						<dt>{name}</dt><dd></dd>
						<dt>纬度:</dt><dd>N28° 15′24.31383″</dd>
						<dt>经度:</dt><dd>E112° 47′21.66226″</dd>
						<dt>高:</dt><dd>56.773 m</dd>
					</dl>
				{/each}
				<div class="actions">
					<button type="submit">确定</button>
					<button type="button">取消</button>
				</div>
			</form>
		</aside>
	</main>

	<div class="statusbar">
		<button class="on" aria-label="矩形选择">{@render icon("snapRect")}</button>
		<button aria-label="多边形选择">{@render icon("snapPoly")}</button>
		<button aria-label="反选">{@render icon("snapInv")}</button>
		<button class="on" aria-label="网格">{@render icon("snapGrid")}</button>
		<button aria-label="测量">{@render icon("measureInfo")}</button>
		<button aria-label="线">{@render icon("snapLines")}</button>
		<button aria-label="正交">{@render icon("snapPerp")}</button>
		<button class="word">捕捉</button>
		<button aria-label="坐标系">{@render icon("map")}</button>
		<button>米</button>
		<button class="word">格网</button>
		<button class="word">缺省的</button>
		<span class="blank"></span>
		<span class="count">1</span>
		<span class="ext">{@render icon("dims", 15)}</span>
		<span class="pos">22914.869 m,12926.748 m</span>
		<button class="last" aria-label="选项">{@render icon("rows")}</button>
	</div>

	<footer>
		{#each Object.entries(apps) as [name, art]}
			<button class="app {name}" aria-label={name}><svg width="24" height="24" viewBox="0 0 24 24" aria-hidden="true">{@html art}</svg></button>
		{/each}
		<div class="tray">
			{#each tray as t}
				<button aria-label={t}>{#if t === "31"}31{:else}{@render icon(t)}{/if}</button>
			{/each}
			<button class="lang">中</button>
			<button class="ime"><b>拼</b></button>
			<div class="clock"><span>21:42</span><span>2025/3/7</span></div>
			<button class="notes" aria-label="通知">
				<svg width="26" height="26" viewBox="0 0 26 26"><path d="M1 3h16v14H9l-3 3v-3H1z" fill="#fff" /><path d="M4 7h10M4 10h10M4 13h6" stroke="#2a3944" /><circle cx="17" cy="17" r="8" fill="#2e3a43" stroke="#909aa1" /><text x="14" y="22" fill="#fff" font-size="13">1</text></svg>
			</button>
		</div>
	</footer>

	<svg class="callouts" aria-hidden="true">
		<rect x="6" y="215" width="189" height="41" fill="none" stroke="#ed1c24" stroke-width="2" />
		<path d="M203 229L266 195" stroke="#ed1c24" stroke-width="5" />
		<path d="M282 188L270 205 259 189z" fill="#ed1c24" />
		<path d="M308 178L1600 299" stroke="#ed1c24" stroke-width="5" />
		<path d="M1616 300L1598 307 1599 291z" fill="#ed1c24" />
	</svg>
</div>

<style>
	:global(body) {
		margin: 0;
		background: #f0f0f0;
	}

	.window {
		position: relative;
		display: flex;
		flex-direction: column;
		min-height: 100vh;
		overflow: hidden;
		background: #f0f0f0;
		color: #000;
		font-family: "Noto Sans", "Noto Sans CJK SC", sans-serif;
		font-size: 12px;
	}

	button {
		display: flex;
		align-items: center;
		justify-content: center;
		margin: 0;
		padding: 0;
		border: 0;
		background: none;
		color: inherit;
		font: inherit;
		white-space: nowrap;
	}

	h1,
	h2,
	h3,
	h4,
	ul,
	dl,
	dd {
		margin: 0;
		padding: 0;
		font-weight: 400;
	}

	.icon {
		flex: none;
	}

	.code {
		font-family: "Liberation Mono", "Noto Sans CJK SC", monospace;
		font-size: 11px;
	}

	/* title bar and tabs */
	header {
		background: #d0d1d7;
	}

	.titlebar {
		display: flex;
		align-items: center;
		height: 23px;
	}

	.quick {
		display: flex;
		align-items: center;
		height: 23px;
	}

	.qa {
		width: 22px;
		height: 22px;
	}

	.on {
		background: #ffdc7f;
	}

	.drop {
		width: 10px;
		height: 22px;
		color: #444;
	}

	.customize {
		width: 16px;
		height: 22px;
	}

	.sep {
		width: 1px;
		height: 16px;
		margin: 0 3px 0 2px;
		background: #f3f3f7;
	}

	.quick-combo {
		width: 71px;
		height: 20px;
		margin-left: 2px;
		background: #fff;
		font-size: 13px;
	}

	h1 {
		flex: 1;
		padding-left: 2px;
		font-size: 12px;
		text-align: center;
	}

	.controls {
		display: flex;
		padding-right: 1px;
	}

	.controls button {
		width: 31px;
		height: 22px;
	}

	nav {
		display: flex;
		height: 24px;
		gap: 3px;
		border-bottom: 1px solid #a7a8ad;
		box-sizing: border-box;
	}

	.tab {
		padding: 0 13px 2px;
		font-size: 13px;
	}

	.tab:first-child {
		padding-left: 11px;
	}

	.tab.latin {
		font-size: 12px;
	}

	.tab.active {
		height: 24px;
		background: #f3f2f7;
	}

	.nav-help {
		display: flex;
		align-items: center;
		gap: 8px;
		margin-left: auto;
		padding-right: 3px;
		color: #444;
	}

	/* ribbon */
	.ribbon {
		display: flex;
		height: 94px;
		background: #f3f2f7;
		border-bottom: 2px solid #b0b1b5;
	}

	.group {
		display: flex;
		flex-direction: column;
		padding-top: 3px;
		flex: none;
		box-sizing: border-box;
		background: linear-gradient(#a9aab0, #a9aab0) no-repeat right 7px / 1px 80px;
	}

	.exchange {
		width: 480px;
	}

	.view {
		width: 621px;
	}

	.data {
		width: 331px;
	}

	.select {
		flex: 1;
		min-width: 0;
		overflow: hidden;
		background: none;
	}

	.cols {
		display: grid;
		height: 71px;
	}

	.exchange .cols {
		grid-template-columns: 58px 60px 75px 204px 76px;
	}

	.view .cols {
		grid-template-columns: 139px 108px 48px 74px 46px 88px auto;
	}

	.data .cols {
		grid-template-columns: 90px 52px 64px auto;
		padding-left: 4px;
	}

	.select .cols {
		grid-template-columns: 96px 104px 117px 94px 60px;
		width: 471px;
	}

	.big {
		flex-direction: column;
		justify-content: flex-start;
		padding-top: 4px;
		box-sizing: border-box;
	}

	.big span {
		margin: 6px 0 3px;
		line-height: 18px;
	}

	.big.on {
		color: #4b4a3c;
	}

	.big.off {
		color: #8a8a8e;
	}

	.select .big:last-child {
		align-items: flex-start;
		padding-left: 8px;
	}

	.select .big:last-child span {
		margin-left: -4px;
	}

	.list {
		padding-left: 3px;
	}

	.cmd {
		height: 23px;
		padding-bottom: 1px;
		gap: 5px;
		box-sizing: border-box;
	}

	.zooms {
		display: flex;
		flex-direction: column;
		gap: 2px;
		height: 70px;
	}

	.zoom-row {
		display: flex;
		height: 23px;
	}

	.zoom-row button {
		width: 21px;
	}

	.combo {
		height: 21px;
		background: #fff;
		justify-content: space-between;
		padding-left: 4px;
	}

	.combo i {
		display: flex;
		align-items: center;
		justify-content: center;
		width: 14px;
		height: 21px;
		background: #d0d1d7;
		color: #555;
	}

	h2 {
		color: #85868c;
		font-size: 13px;
		line-height: 15px;
		text-align: center;
	}

	.ribbon-next {
		width: 11px;
		background: #fbfbfd;
		border-left: 1px solid #a9aab0;
		border-right: 1px solid #a9aab0;
		box-sizing: border-box;
	}

	.ribbon-end {
		display: flex;
		align-items: flex-end;
		width: 30px;
	}

	.ribbon-end button {
		width: 30px;
		height: 18px;
		background: #d0d1d7;
	}

	/* docked panels */
	main {
		display: flex;
		flex: 1;
		min-height: 0;
		border-bottom: 1px solid #c8c8cc;
	}

	.panel-head {
		display: flex;
		align-items: center;
		height: 22px;
		padding-right: 2px;
		background: #d0d1d7;
	}

	h3 {
		flex: 1;
		padding-bottom: 3px;
		font-size: 13px;
	}

	.tool {
		width: 22px;
		height: 22px;
	}

	.explorer {
		width: 206px;
		margin-right: 4px;
		background: #f3f2f7;
	}

	.explorer .panel-head .icon {
		margin-left: -5px;
		margin-right: 4px;
	}

	.tree {
		list-style: none;
		padding-top: 1px;
	}

	.tree li {
		display: flex;
		align-items: center;
		height: 17px;
		box-sizing: border-box;
	}

	.tree button {
		height: 17px;
		margin-left: 2px;
		padding-bottom: 1px;
		box-sizing: border-box;
	}

	.tree .code {
		margin-left: 3px;
	}

	.tree .icon {
		position: relative;
		top: 2px;
	}

	.twisty {
		flex: none;
		margin-right: 3px;
	}

	.level0 {
		margin-left: -4px;
	}

	.level1 {
		padding-left: 5px;
	}

	.level2 {
		margin-left: 13px;
	}

	.level3 {
		padding-left: 22px;
	}

	.selected {
		outline: 1px dotted #000;
		outline-offset: -1px;
	}

	.tree .selected button {
		flex: 1;
		justify-content: flex-start;
		margin-left: 0;
		padding-left: 3px;
		background: #ffdc7f;
	}

	.props {
		display: flex;
		flex-direction: column;
		width: 195px;
		margin-right: 4px;
		border-left: 1px solid #8d8e93;
		box-sizing: border-box;
	}

	.props .panel-head .icon,
	.coords .panel-head .icon {
		margin: 0 4px 0 0;
	}

	.coords .panel-head .icon {
		margin-right: 8px;
	}

	.panel-tools {
		display: flex;
		align-items: center;
		height: 24px;
		padding-left: 2px;
		border-top: 2px solid #f7f7f9;
		background: #d0d1d7;
	}

	.panel-tools button {
		width: 22px;
		height: 22px;
	}

	.panel-tools button.on {
		background: #ffebb8;
	}

	.what {
		display: flex;
		height: 32px;
		overflow: hidden;
	}

	.what-icon {
		display: flex;
		align-items: center;
		justify-content: center;
		width: 32px;
		background: #fff;
	}

	.what-text {
		display: flex;
		flex-direction: column;
		padding-left: 8px;
		line-height: 12px;
	}

	.pick {
		position: relative;
		height: 20px;
	}

	select {
		width: 100%;
		height: 20px;
		padding: 0 3px;
		border: 1px solid #a5a6aa;
		border-radius: 0;
		background: #e1e1e1;
		appearance: none;
		color: #000;
		font: 12px "Liberation Mono", "Noto Sans CJK SC", monospace;
	}

	.chev {
		position: absolute;
		right: 4px;
		top: 7px;
	}

	.sheet {
		border: 1px solid #85868a;
		background: #f3f2f7;
		padding-bottom: 14px;
	}

	h4 {
		display: flex;
		align-items: center;
		height: 24px;
		padding: 0 5px 4px;
		gap: 5px;
		box-sizing: border-box;
		background: #cfd0d6;
		font-size: 13px;
		font-weight: 700;
	}

	h4 i {
		width: 7px;
		height: 7px;
		margin-top: 4px;
		border: 1px solid #9a9a9e;
		background: linear-gradient(#000, #000) no-repeat center / 5px 1px #fff;
	}

	table {
		width: calc(100% - 7px);
		margin: 5px 0 5px 7px;
		border-collapse: collapse;
		table-layout: fixed;
	}

	th,
	td {
		height: 22px;
		padding: 0 0 4px 3px;
		border: 1px solid #d9d9dc;
		box-sizing: border-box;
		font-weight: 400;
		text-align: left;
		vertical-align: top;
		white-space: nowrap;
	}

	tr {
		height: 23px;
	}

	.tall {
		height: 27px;
	}

	th {
		width: 83px;
		padding-left: 5px;
		background: #f5f5f5;
		font-size: 13px;
		line-height: 18px;
	}

	td {
		padding-bottom: 0;
		background: #fff;
		color: #00f;
	}

	tr:nth-child(even) td {
		background: #efefef;
	}

	.off th,
	.off td {
		color: #808084;
	}

	.cell {
		position: relative;
		display: flex;
		height: 20px;
		line-height: 17px;
	}

	.cell .cjk {
		font-size: 13px;
		line-height: 18px;
	}

	.cell button {
		position: absolute;
		right: 0;
		top: 4px;
	}

	.cell .more {
		width: 16px;
		height: 16px;
		border: 1px solid #000;
		background: #fff;
		box-sizing: border-box;
		color: #000;
	}

	.hint {
		flex: 1;
		margin: 6px 1px 1px;
		border: 1px solid #d3dde4;
		border-radius: 4px;
	}

	/* plan view */
	.plan {
		display: flex;
		flex-direction: column;
		flex: 1;
		min-width: 0;
		border-left: 1px solid #9c9da2;
	}

	.plan-tabs {
		display: flex;
		align-items: flex-end;
		height: 25px;
		padding-left: 5px;
		background: #d0d1d7;
	}

	.plan-tab {
		height: 22px;
		padding: 0 9px 0 3px;
		gap: 20px;
		background: #f3f2f7;
	}

	.map {
		flex: 1;
		width: 100%;
		min-height: 848px;
		background: #000;
	}

	.grid line,
	.scale {
		stroke: #8a8a8a;
		stroke-width: 1;
		fill: none;
		shape-rendering: crispEdges;
	}

	.scale {
		stroke: #fff;
	}

	.axis text {
		fill: #8a8a8a;
		font: 13px "Liberation Sans", sans-serif;
	}

	.network {
		fill: none;
		stroke: #008f8b;
		stroke-width: 1;
		shape-rendering: crispEdges;
	}

	.map circle {
		fill: none;
		stroke: #fff;
	}

	.mark {
		fill: #fff;
		font: 13px "Liberation Sans", sans-serif;
	}

	/* add coordinate panel */
	.coords {
		display: flex;
		flex-direction: column;
		width: 305px;
		margin-left: 5px;
		border-left: 1px solid #9c9da2;
		box-sizing: border-box;
		background: #f3f2f7;
	}

	.grip {
		width: 5px;
		height: 18px;
		margin-right: 5px;
		background: radial-gradient(#a0a1a6 1px, transparent 1px) 0 0 / 3px 3px;
	}

	.coords .sep {
		margin: 0 3px;
	}

	form {
		display: flex;
		flex-direction: column;
		flex: 1;
		padding: 8px 11px 4px 11px;
		font: 12px "Liberation Mono", "Noto Sans CJK SC", monospace;
	}

	form label {
		height: 16px;
		margin: 0 0 3px 2px;
		line-height: 16px;
	}

	form input {
		box-sizing: border-box;
		min-width: 0;
		height: 19px;
		padding: 0 2px;
		border: 1px solid #7a7a7a;
		background: #f3f2f7;
		color: #000;
		font: 11px "Liberation Mono", monospace;
	}

	form .wide {
		height: 21px;
		margin-bottom: 5px;
	}

	form .wide + label {
		margin-bottom: 0;
	}

	form .pick {
		margin: 0 28px 4px 0;
	}

	.field,
	.label-help {
		position: relative;
		display: flex;
		align-items: center;
		margin: 0 28px 2px 1px;
	}

	.label-help {
		margin-left: 0;
		margin-bottom: 0;
	}

	.field input {
		flex: 1;
		margin-left: 1px;
	}

	.unknown {
		position: absolute;
		left: calc(100% + 5px);
		width: 20px;
		height: 18px;
		border: 1px solid #adadad;
		background: #e1e1e1;
		box-sizing: border-box;
	}

	.play {
		width: 19px;
		height: 19px;
		margin-left: -1px;
		border: 1px solid #7a7a7a;
		background: #fff;
		box-sizing: border-box;
	}

	.status-label {
		margin-top: 4px;
	}

	dl {
		display: grid;
		grid-template-columns: 47px 1fr;
		margin: 8px 0 0 5px;
		line-height: 12px;
	}

	dd {
		font-size: 11px;
	}

	.actions {
		display: flex;
		justify-content: flex-end;
		gap: 4px;
		margin: auto -8px 0 0;
	}

	.actions button {
		width: 78px;
		height: 19px;
		border: 1px solid #adadad;
		background: #e1e1e1;
		box-sizing: border-box;
	}

	/* status bar */
	.statusbar {
		display: flex;
		justify-content: flex-end;
		height: 23px;
	}

	.statusbar > * {
		display: flex;
		align-items: center;
		justify-content: center;
		width: 20px;
		border-right: 1px solid #d0d0d4;
		box-sizing: border-box;
		font: 12px "Liberation Mono", "Noto Sans CJK SC", monospace;
	}

	.statusbar > .word {
		width: auto;
		padding: 0 5px;
	}

	.statusbar .pos {
		width: 242px;
		justify-content: flex-start;
		padding-left: 5px;
		font-size: 11px;
	}

	.statusbar .last {
		border: 0;
	}

	/* task bar */
	footer {
		display: flex;
		height: 40px;
		background: #273742;
		color: #fff;
	}

	.app {
		width: 49px;
		border-bottom: 2px solid transparent;
		box-sizing: border-box;
	}

	.app.start {
		width: 44px;
	}

	.app.start svg {
		width: 20px;
	}

	.app.clover,
	.app.monitor {
		width: 40px;
		margin-left: 6px;
		border-bottom-color: #76b9ed;
	}

	.app.monitor {
		margin-left: 9px;
	}

	.app.bolt {
		width: 40px;
		margin: 0 5px 0 9px;
		border-bottom-color: #4de62c;
		background: #44784f;
	}

	.app.trimble {
		width: 48px;
		border-bottom-color: #76b9ed;
		background: #54636c;
	}

	.tray {
		display: flex;
		margin-left: auto;
		padding-right: 5px;
	}

	.tray > button {
		width: 24px;
	}

	.tray > .lang {
		font-size: 16px;
	}

	.tray > .ime {
		width: 36px;
	}

	.ime b {
		width: 15px;
		height: 16px;
		border: 1px solid #fff;
		font-size: 13px;
		font-weight: 400;
		line-height: 15px;
	}

	.clock {
		display: flex;
		flex-direction: column;
		justify-content: center;
		width: 71px;
		line-height: 18px;
		text-align: center;
	}

	.tray > .notes {
		width: 50px;
	}

	/* red call-outs drawn over the whole window */
	.callouts {
		position: absolute;
		inset: 0;
		width: 100%;
		height: 100%;
		pointer-events: none;
	}
</style>
